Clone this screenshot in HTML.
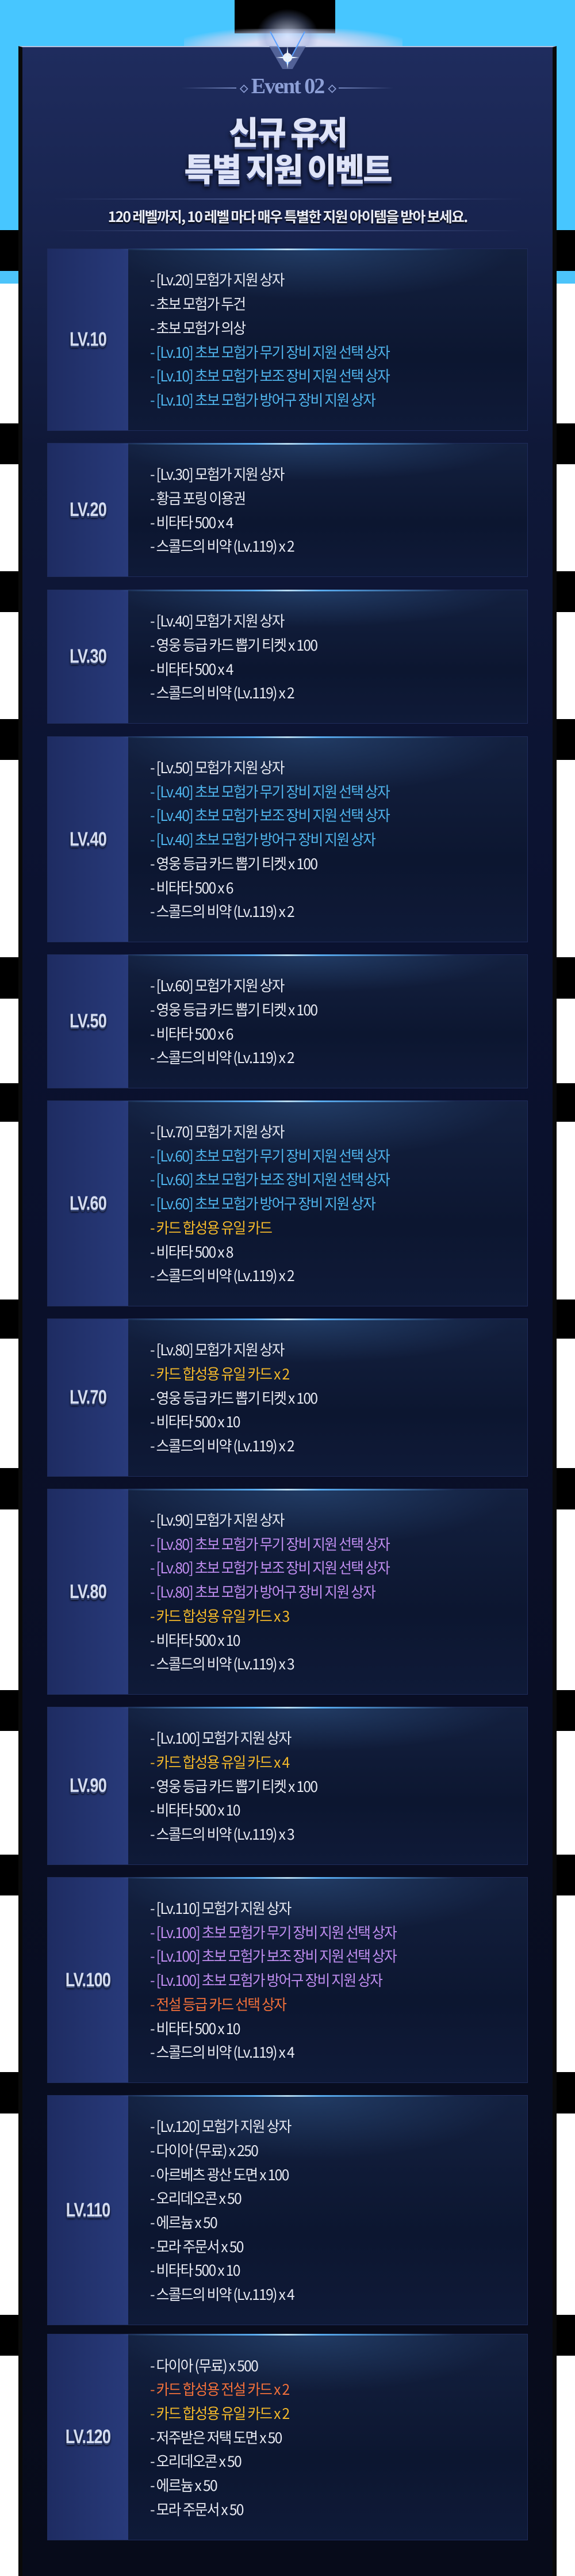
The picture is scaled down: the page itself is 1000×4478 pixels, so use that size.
<!DOCTYPE html>
<html><head><meta charset="utf-8">
<style>
*{margin:0;padding:0;box-sizing:border-box}
html,body{width:1000px;height:4478px;overflow:hidden;background:#fff}
body{position:relative;font-family:"Liberation Sans","Noto Sans CJK KR",sans-serif}
.band{position:absolute;height:0;left:0;width:1000px;background:#000}
#panel{position:absolute;left:32px;top:80px;width:936px;height:4398px;
 background:linear-gradient(#1f2c5e 0px,#18244f 300px,#0f1838 700px,#0b1230 1500px,#090e24 3000px,#070b1a 4398px);
 border-left:7px solid #0a0a0a;border-right:7px solid #0a0a0a;border-top:2px solid #b8c2de}
.card{position:absolute;left:82px;width:836px;border:1px solid #1f2c5c;
 background:radial-gradient(ellipse 60% 40% at 55% 0%,rgba(60,110,170,.35),transparent 70%),linear-gradient(#13203f,#0c1630 60%,#0f1a38);
 display:flex}
.card:before{content:"";position:absolute;left:15%;right:15%;top:-1px;height:3px;
 background:linear-gradient(90deg,transparent,#5fb8ff 40%,#c8ecff 50%,#5fb8ff 60%,transparent);opacity:.9}
.lab{width:140px;flex:none;background:linear-gradient(90deg,#1e2c62,#283a7a);
 display:flex;align-items:center;justify-content:center;}
.lab span{font:700 34px "Liberation Sans","Noto Sans CJK KR",sans-serif;letter-spacing:-1px;color:#d4dcf0;
 text-shadow:0 3px 0 #3a4a78,0 4px 4px #000;transform:scaleX(.8);display:inline-block}
.txt{padding-left:40px;display:flex;flex-direction:column;justify-content:center;
 font:400 26px "Noto Sans CJK KR",sans-serif;letter-spacing:-1.8px;line-height:41.7px;color:#e8eaf2;white-space:nowrap;
 transform:scaleX(.95);transform-origin:0 50%}
.b{color:#4fb4ec}.y{color:#f4b92a}.o{color:#f2703a}.p{color:#c08df0}
</style></head><body>
<div style="position:absolute;left:0;top:0;width:1000px;height:400px;background:#47c6ff"></div>
<div style="position:absolute;left:0;top:400px;width:1000px;height:71px;background:#000"></div>
<div style="position:absolute;left:0;top:471px;width:1000px;height:22px;background:#4cc4fa"></div>
<div class="band" style="top:736px;height:71px"></div>
<div class="band" style="top:993px;height:71px"></div>
<div class="band" style="top:1250px;height:71px"></div>
<div class="band" style="top:1664px;height:72px"></div>
<div class="band" style="top:1883px;height:67px"></div>
<div class="band" style="top:2259px;height:68px"></div>
<div class="band" style="top:2552px;height:72px"></div>
<div class="band" style="top:2938px;height:71px"></div>
<div class="band" style="top:3224px;height:71px"></div>
<div class="band" style="top:3602px;height:72px"></div>
<div class="band" style="top:4024px;height:71px"></div>
<div style="position:absolute;left:408px;top:0;width:175px;height:58px;background:#000"></div>
<div style="position:absolute;left:320px;top:50px;width:380px;height:32px;background:radial-gradient(ellipse at 50% 100%,#d8dcf4 30%,rgba(200,210,240,.6) 60%,transparent 80%)"></div>
<div style="position:absolute;left:445px;top:15px;width:110px;height:80px;background:radial-gradient(ellipse at 50% 60%,rgba(220,230,255,.8),rgba(120,140,200,.3) 50%,transparent 70%)"></div>
<div id="panel"></div>
<svg style="position:absolute;left:440px;top:40px" width="120" height="80" viewBox="0 0 120 80">
 <path d="M28 40 L44 40 L60 70 L76 40 L92 40 L60 95Z" fill="#6a7ab0" opacity=".7"/>
 <path d="M30 15 L60 72 L90 15" stroke="#5aa0ff" stroke-width="2" fill="none"/>
 <circle cx="60" cy="60" r="8" fill="#fff" opacity=".9"/>
 <path d="M60 40 L62 58 L80 60 L62 62 L60 80 L58 62 L40 60 L58 58Z" fill="#e8f4ff"/>
</svg>
<div style="position:absolute;left:0;width:1000px;top:128px;text-align:center;font:700 38px 'Liberation Serif',serif;color:#8d9fd6;letter-spacing:-2px">
 <span style="display:inline-block;width:95px;height:2px;background:linear-gradient(90deg,transparent,#7788c0);vertical-align:middle;margin-right:6px"></span><span style="font-size:18px;vertical-align:middle">◇</span> Event 02 <span style="font-size:18px;vertical-align:middle">◇</span><span style="display:inline-block;width:95px;height:2px;background:linear-gradient(90deg,#7788c0,transparent);vertical-align:middle;margin-left:6px"></span>
</div>
<div style="position:absolute;left:0;width:1000px;top:196px;text-align:center;font:900 56px/64px 'Noto Sans CJK KR',sans-serif;letter-spacing:-3px;color:#dfe4f8;text-shadow:0 4px 0 #3c4a80,0 6px 8px #000">신규 유저<br>특별 지원 이벤트</div>
<div style="position:absolute;left:92px;top:345px;width:817px;height:2px;background:linear-gradient(90deg,transparent,#4a5a90,transparent)"></div>
<div style="position:absolute;left:0;width:1000px;top:358px;text-align:center;font:700 25px 'Noto Sans CJK KR',sans-serif;letter-spacing:-1.8px;color:#e8ebf6;text-shadow:0 2px 2px #000">120 레벨까지, 10 레벨 마다 매우 특별한 지원 아이템을 받아 보세요.</div>
<div style="position:absolute;left:92px;top:400px;width:817px;height:2px;background:linear-gradient(90deg,transparent,#4a5a90,transparent)"></div>

<div class="card" style="top:432px;height:317px"><div class="lab"><span>LV.10</span></div><div class="txt">
<div>- [Lv.20] 모험가 지원 상자</div><div>- 초보 모험가 두건</div><div>- 초보 모험가 의상</div>
<div class="b">- [Lv.10] 초보 모험가 무기 장비 지원 선택 상자</div><div class="b">- [Lv.10] 초보 모험가 보조 장비 지원 선택 상자</div><div class="b">- [Lv.10] 초보 모험가 방어구 장비 지원 상자</div></div></div>

<div class="card" style="top:770px;height:233px"><div class="lab"><span>LV.20</span></div><div class="txt">
<div>- [Lv.30] 모험가 지원 상자</div><div>- 황금 포링 이용권</div><div>- 비타타 500 x 4</div><div>- 스콜드의 비약 (Lv.119) x 2</div></div></div>

<div class="card" style="top:1025px;height:233px"><div class="lab"><span>LV.30</span></div><div class="txt">
<div>- [Lv.40] 모험가 지원 상자</div><div>- 영웅 등급 카드 뽑기 티켓 x 100</div><div>- 비타타 500 x 4</div><div>- 스콜드의 비약 (Lv.119) x 2</div></div></div>

<div class="card" style="top:1280px;height:358px"><div class="lab"><span>LV.40</span></div><div class="txt">
<div>- [Lv.50] 모험가 지원 상자</div><div class="b">- [Lv.40] 초보 모험가 무기 장비 지원 선택 상자</div><div class="b">- [Lv.40] 초보 모험가 보조 장비 지원 선택 상자</div><div class="b">- [Lv.40] 초보 모험가 방어구 장비 지원 상자</div><div>- 영웅 등급 카드 뽑기 티켓 x 100</div><div>- 비타타 500 x 6</div><div>- 스콜드의 비약 (Lv.119) x 2</div></div></div>

<div class="card" style="top:1659px;height:233px"><div class="lab"><span>LV.50</span></div><div class="txt">
<div>- [Lv.60] 모험가 지원 상자</div><div>- 영웅 등급 카드 뽑기 티켓 x 100</div><div>- 비타타 500 x 6</div><div>- 스콜드의 비약 (Lv.119) x 2</div></div></div>

<div class="card" style="top:1913px;height:358px"><div class="lab"><span>LV.60</span></div><div class="txt">
<div>- [Lv.70] 모험가 지원 상자</div><div class="b">- [Lv.60] 초보 모험가 무기 장비 지원 선택 상자</div><div class="b">- [Lv.60] 초보 모험가 보조 장비 지원 선택 상자</div><div class="b">- [Lv.60] 초보 모험가 방어구 장비 지원 상자</div><div class="y">- 카드 합성용 유일 카드</div><div>- 비타타 500 x 8</div><div>- 스콜드의 비약 (Lv.119) x 2</div></div></div>

<div class="card" style="top:2292px;height:275px"><div class="lab"><span>LV.70</span></div><div class="txt">
<div>- [Lv.80] 모험가 지원 상자</div><div class="y">- 카드 합성용 유일 카드 x 2</div><div>- 영웅 등급 카드 뽑기 티켓 x 100</div><div>- 비타타 500 x 10</div><div>- 스콜드의 비약 (Lv.119) x 2</div></div></div>

<div class="card" style="top:2588px;height:358px"><div class="lab"><span>LV.80</span></div><div class="txt">
<div>- [Lv.90] 모험가 지원 상자</div><div class="p">- [Lv.80] 초보 모험가 무기 장비 지원 선택 상자</div><div class="p">- [Lv.80] 초보 모험가 보조 장비 지원 선택 상자</div><div class="p">- [Lv.80] 초보 모험가 방어구 장비 지원 상자</div><div class="y">- 카드 합성용 유일 카드 x 3</div><div>- 비타타 500 x 10</div><div>- 스콜드의 비약 (Lv.119) x 3</div></div></div>

<div class="card" style="top:2967px;height:275px"><div class="lab"><span>LV.90</span></div><div class="txt">
<div>- [Lv.100] 모험가 지원 상자</div><div class="y">- 카드 합성용 유일 카드 x 4</div><div>- 영웅 등급 카드 뽑기 티켓 x 100</div><div>- 비타타 500 x 10</div><div>- 스콜드의 비약 (Lv.119) x 3</div></div></div>

<div class="card" style="top:3263px;height:358px"><div class="lab"><span>LV.100</span></div><div class="txt">
<div>- [Lv.110] 모험가 지원 상자</div><div class="p">- [Lv.100] 초보 모험가 무기 장비 지원 선택 상자</div><div class="p">- [Lv.100] 초보 모험가 보조 장비 지원 선택 상자</div><div class="p">- [Lv.100] 초보 모험가 방어구 장비 지원 상자</div><div class="o">- 전설 등급 카드 선택 상자</div><div>- 비타타 500 x 10</div><div>- 스콜드의 비약 (Lv.119) x 4</div></div></div>

<div class="card" style="top:3642px;height:400px"><div class="lab"><span>LV.110</span></div><div class="txt">
<div>- [Lv.120] 모험가 지원 상자</div><div>- 다이아 (무료) x 250</div><div>- 아르베츠 광산 도면 x 100</div><div>- 오리데오콘 x 50</div><div>- 에르늄 x 50</div><div>- 모라 주문서 x 50</div><div>- 비타타 500 x 10</div><div>- 스콜드의 비약 (Lv.119) x 4</div></div></div>

<div class="card" style="top:4057px;height:359px"><div class="lab"><span>LV.120</span></div><div class="txt">
<div>- 다이아 (무료) x 500</div><div class="o">- 카드 합성용 전설 카드 x 2</div><div class="y">- 카드 합성용 유일 카드 x 2</div><div>- 저주받은 저택 도면 x 50</div><div>- 오리데오콘 x 50</div><div>- 에르늄 x 50</div><div>- 모라 주문서 x 50</div></div></div>
</body></html>
